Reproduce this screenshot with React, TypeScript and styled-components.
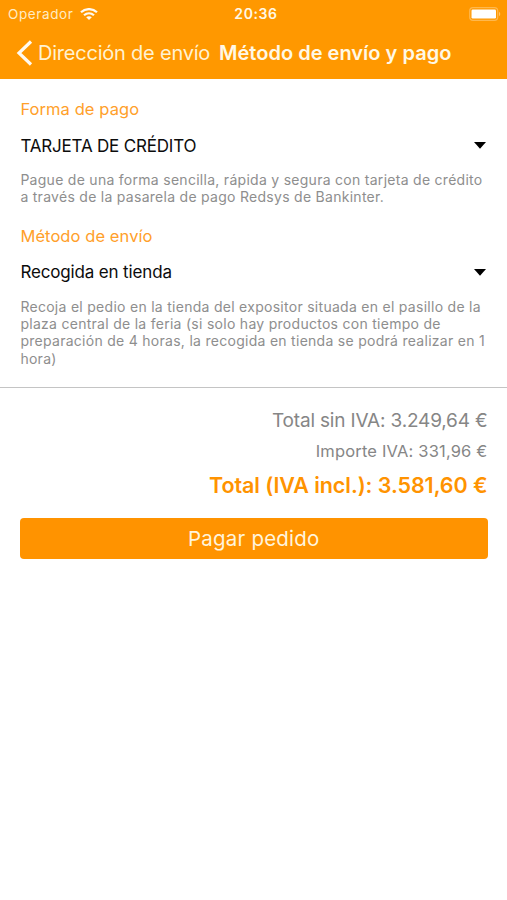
import React from 'react';
import styled, { createGlobalStyle } from 'styled-components';

const ORANGE = '#ff9800';
const DEEP_ORANGE = '#ff9300';

const GlobalStyle = createGlobalStyle`
  * { box-sizing: border-box; }
  html, body { margin: 0; background: #fff; }
  body { font-family: Inter, "Liberation Sans", sans-serif; }
`;

const Screen = styled.div`
  display: flex;
  flex-direction: column;
  min-height: 900px;
  background: #fff;
`;

const Header = styled.header`
  height: 79px;
  background: ${ORANGE};
  color: #fff8e6;
`;

const StatusBar = styled.div`
  display: grid;
  grid-template-columns: 1fr auto 1fr;
  align-items: center;
  height: 27px;
  padding: 0 6px 0 8px;
  font-size: 13.5px;
  line-height: 28px;
`;

const Carrier = styled.div`
  display: flex;
  align-items: center;
  gap: 6px;
  letter-spacing: 0.62px;
  color: #ffecc4;
`;

const Clock = styled.div`
  padding-left: 3px;
  font-size: 14px;
  font-weight: 600;
  letter-spacing: 0.6px;
`;

const BatterySlot = styled.div`
  display: flex;
  justify-content: flex-end;
`;

const NavBar = styled.nav`
  display: flex;
  align-items: center;
  height: 52px;
  padding-left: 16px;
  font-size: 20px;
  line-height: 52px;
  white-space: nowrap;
`;

const BackButton = styled.button`
  display: flex;
  align-items: center;
  gap: 5px;
  width: 203px;
  padding: 0;
  border: 0;
  background: none;
  color: #fff2d2;
  font: inherit;
  letter-spacing: -0.22px;
`;

const Title = styled.h1`
  margin: 0;
  font-size: 20px;
  font-weight: 600;
  letter-spacing: 0.02px;
`;

const Form = styled.main`
  display: flex;
  flex-direction: column;
  gap: 19.9px;
  height: 309px;
  padding: 20px 20px 0 20.4px;
  border-bottom: 1px solid #c4c4c4;
`;

const Label = styled.h2`
  margin: 0 0 16.8px;
  color: #ffa02a;
  font-size: 16.5px;
  font-weight: 400;
  line-height: 20px;
  letter-spacing: 0.08px;
`;

const Select = styled.div<{ $tracking: number }>`
  display: flex;
  align-items: center;
  justify-content: space-between;
  height: 20px;
  margin-bottom: 15.3px;
  padding-right: 1px;
  color: #0c0c0c;
  font-size: 17px;
  line-height: 20px;
  letter-spacing: ${({ $tracking }) => $tracking}px;
`;

const Description = styled.p`
  margin: 0;
  color: #8e8e8e;
  font-size: 14px;
  line-height: 17.3px;
  letter-spacing: 0.28px;
  white-space: nowrap;
`;

const Summary = styled.section`
  display: flex;
  flex-direction: column;
  padding: 19px 19.5px 0 20px;
  text-align: right;
`;

const Net = styled.div`
  color: #868686;
  font-size: 19px;
  line-height: 28px;
  letter-spacing: -0.17px;
`;

const Tax = styled.div`
  color: #868686;
  margin-top: 2px;
  font-size: 16.5px;
  line-height: 28px;
  letter-spacing: 0.17px;
`;

const Total = styled.div`
  color: ${DEEP_ORANGE};
  margin-top: 3px;
  font-size: 21.5px;
  font-weight: 560;
  line-height: 34px;
  letter-spacing: -0.07px;
`;

const PayButton = styled.button`
  height: 41.5px;
  margin-top: 15.5px;
  padding: 0;
  border: 0;
  border-radius: 4px;
  background: ${DEEP_ORANGE};
  color: #fff4dc;
  font-family: inherit;
  font-size: 20.5px;
  line-height: 41px;
  letter-spacing: 0.2px;
`;

const WifiIcon = () => (
  <svg width="18" height="12" viewBox="0 0 18 12" fill="none" stroke="#fffaf0" strokeWidth="2.200">
    <path d="M1 4.300C5.500 0 12.500 0 17 4.300" />
    <path d="M4 7.300C7 4.600 11 4.600 14 7.300" />
    <path d="M9 12 6.200 9.200C7.800 7.800 10.200 7.800 11.800 9.200Z" fill="#fffaf0" stroke="none" />
  </svg>
);

const BatteryIcon = () => (
  <svg width="32" height="14" viewBox="0 0 32 14">
    <rect x="0.700" y="0.700" width="28" height="12.600" rx="3.300" fill="none" stroke="#ffb84d" strokeWidth="1.200" />
    <rect x="2.500" y="2.500" width="24.500" height="9" rx="1.200" fill="#fff" />
    <path d="M30 4.800C31.700 5.500 31.700 8.500 30 9.200Z" fill="#ffc469" />
  </svg>
);

const BackIcon = () => (
  <svg width="17" height="28" viewBox="0 0 17 28" fill="none" stroke="#fffaf0" strokeWidth="3.200">
    <path d="M15 2.500 3 14 15 25.500" />
  </svg>
);

const Caret = () => (
  <svg width="12" height="7" viewBox="0 0 12 7">
    <path d="M0 0H12L6 6.700Z" fill="#000" />
  </svg>
);

export default function App() {
  return (
    <Screen>
      <GlobalStyle />
      <Header>
        <StatusBar>
          <Carrier>Operador <WifiIcon /></Carrier>
          <Clock>20:36</Clock>
          <BatterySlot><BatteryIcon /></BatterySlot>
        </StatusBar>
        <NavBar>
          <BackButton><BackIcon />Dirección de envío</BackButton>
          <Title>Método de envío y pago</Title>
        </NavBar>
      </Header>
      <Form>
        <div>
          <Label>Forma de pago</Label>
          <Select $tracking={-0.19}>TARJETA DE CRÉDITO<Caret /></Select>
          <Description>
            Pague de una forma sencilla, rápida y segura con tarjeta de crédito<br />
            a través de la pasarela de pago Redsys de Bankinter.
          </Description>
        </div>
        <div>
          <Label>Método de envío</Label>
          <Select $tracking={-0.15}>Recogida en tienda<Caret /></Select>
          <Description>
            Recoja el pedio en la tienda del expositor situada en el pasillo de la<br />
            plaza central de la feria (si solo hay productos con tiempo de<br />
            preparación de 4 horas, la recogida en tienda se podrá realizar en 1<br />
            hora)
          </Description>
        </div>
      </Form>
      <Summary>
        <Net>Total sin IVA: 3.249,64 €</Net>
        <Tax>Importe IVA: 331,96 €</Tax>
        <Total>Total (IVA incl.): 3.581,60 €</Total>
        <PayButton>Pagar pedido</PayButton>
      </Summary>
    </Screen>
  );
}
